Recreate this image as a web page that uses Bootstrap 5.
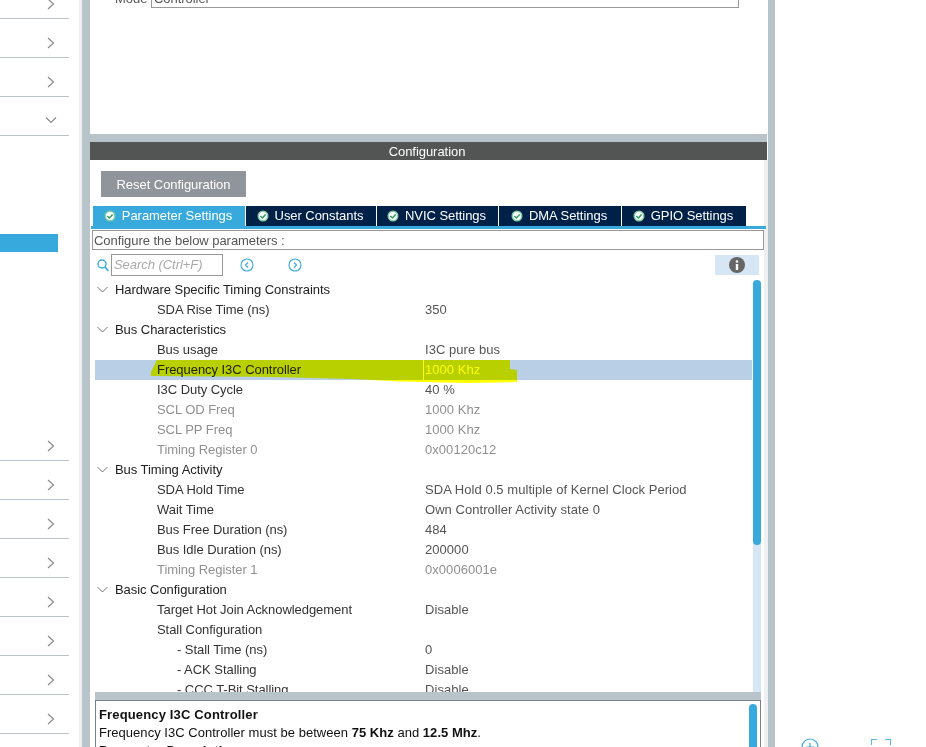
<!DOCTYPE html>
<html lang="en"><head><meta charset="utf-8"><title>Configuration</title>
<link rel="stylesheet" href="https://cdn.jsdelivr.net/npm/bootstrap@5.3.0/dist/css/bootstrap.min.css">
<style>
html,body{height:747px;overflow:hidden;background:#fff}
body{font-family:"Liberation Sans",Arial,sans-serif;font-size:13px;letter-spacing:-.05px;color:#333;position:relative;line-height:20px}
.shell{height:747px}
.side{width:69px;flex:none;margin-top:-20px}
.side-row{height:39px;border-bottom:1px solid #b9c4ca;padding:10px 14px 0 0}
.side-row.open{padding:8px 12px 0 0}
.side-gap{height:286px;padding-top:98px}
.side-sel{width:58px;height:18px;background:#38a9dc}
.strip{flex:none;margin-left:10px;width:11px;background:linear-gradient(90deg,#eef0f1 0,#eef0f1 3px,#b8c4ca 3px)}
.center{width:678px;flex:none}
.top-panel{height:134px;overflow:hidden;margin-right:1px}
.mode-row{margin-top:-11px;padding-left:25px;height:20px;color:#555}
.mode-lbl{width:36px;flex:none}
.mode-box{width:588px;border:1px solid #999;border-top:0;height:19px;padding-left:2px}
.band{height:8px;background:#b8c4ca;margin-right:1px}
.cfg-head{height:18px;margin-right:1px;background:#535554;color:#fff;text-align:center;line-height:19px;padding-right:3px}
.cfg-body{height:587px;overflow:hidden;position:relative;background:linear-gradient(90deg,#fff calc(100% - 4px),#eef0f1 0)}
.reset-btn{margin:11px 0 9px 11px;width:145px;height:26px;background:#8f959b;color:#fff;border:0;border-radius:0;font-size:13px;letter-spacing:-.05px;padding:1px 0 0;line-height:25px}
.tabs-row{margin-left:3px;height:20px;gap:1px}
.tab-item{height:20px;background:#002147;color:#fff;display:flex;align-items:center;justify-content:center;gap:6px;padding:0 2px 0 0}
.tab-item.on{background:#38a9dc}
.tab-line{height:3px;margin:0 2px 0 1px;background:#38a9dc}
.hint-box{height:20px;margin:1px 4px 0 2px;border:1px solid #999;padding-left:1px;line-height:19px;color:#555}
.search-row{height:22px;margin:4px 0 4px 7px;align-items:center}
.search-in{width:112px;height:22px;border:1px solid #999;padding:0 2px;font-style:italic;color:#aaa;line-height:20px;margin-left:2px}
.nav-ico{margin-left:17px}
.info-btn{width:44px;height:20px;background:#d6e6f5;margin-left:auto;margin-right:9px;display:flex;align-items:center;justify-content:center}
.tree-wrap{height:412px;margin-left:5px;margin-right:7px;overflow:hidden}
.tree{width:657px;flex:none;overflow:hidden;height:412px}
.t-row{height:20px;position:relative;line-height:19px}
.t-name{width:330px;flex:none}
.t-row .t-chev{width:18px;height:19px;flex:none;margin-left:2px;display:flex;align-items:center}
.lv1 .t-name{width:310px;color:#222}
.lv2 .t-name{margin-left:62px;width:268px}
.lv3 .t-name{margin-left:82px;width:248px}
.t-val{color:#555;letter-spacing:.05px}
.off,.off .t-val{color:#909090}
.t-sel{background:#b8cfe6;color:#222}
.t-sel .t-val{color:#fff;border-left:1px solid #fff;padding-left:1px;margin-left:-2px}
.tree-track{width:8px;flex:none;height:412px;margin-left:1px;background:#d6e6f5;border-radius:4px 4px 0 0}
.tree-thumb{height:265px;background:#38a9dc;border-radius:4px}
.desc-band{height:8px;margin:0 7px 0 5px;background:#b8c4ca}
.desc-box{margin:0 7px 0 5px;border:1px solid #76838a;border-bottom:0;height:60px;padding:5px 3px;color:#111;line-height:18px;letter-spacing:.03px;position:relative;overflow:hidden}
.desc-title{letter-spacing:.15px}
.desc-thumb{position:absolute;right:3px;top:3px;width:8px;height:60px;background:#38a9dc;border-radius:4px}
.gutter2{width:7px;flex:none;background:#b8c4ca}
.marker{position:absolute;left:150px;top:358px;width:370px;height:28px;mix-blend-mode:multiply;pointer-events:none}
.corner-ico{position:absolute;top:738px}
</style></head><body>
<div class="shell d-flex">
  <nav class="side">
    <div class="side-row d-flex align-items-center justify-content-end"><svg width="8" height="12" viewBox="0 0 8 12"><path d="M1 1l5.500 5L1 11" fill="none" stroke="#8a8a8a" stroke-width="1.200"/></svg></div>
    <div class="side-row d-flex align-items-center justify-content-end"><svg width="8" height="12" viewBox="0 0 8 12"><path d="M1 1l5.500 5L1 11" fill="none" stroke="#8a8a8a" stroke-width="1.200"/></svg></div>
    <div class="side-row d-flex align-items-center justify-content-end"><svg width="8" height="12" viewBox="0 0 8 12"><path d="M1 1l5.500 5L1 11" fill="none" stroke="#8a8a8a" stroke-width="1.200"/></svg></div>
    <div class="side-row open d-flex align-items-center justify-content-end"><svg width="12" height="8" viewBox="0 0 12 8"><path d="M1 1.500l5 5 5-5" fill="none" stroke="#8a8a8a" stroke-width="1.200"/></svg></div>
    <div class="side-gap"><div class="side-sel"></div></div>
    <div class="side-row d-flex align-items-center justify-content-end"><svg width="8" height="12" viewBox="0 0 8 12"><path d="M1 1l5.500 5L1 11" fill="none" stroke="#8a8a8a" stroke-width="1.200"/></svg></div>
    <div class="side-row d-flex align-items-center justify-content-end"><svg width="8" height="12" viewBox="0 0 8 12"><path d="M1 1l5.500 5L1 11" fill="none" stroke="#8a8a8a" stroke-width="1.200"/></svg></div>
    <div class="side-row d-flex align-items-center justify-content-end"><svg width="8" height="12" viewBox="0 0 8 12"><path d="M1 1l5.500 5L1 11" fill="none" stroke="#8a8a8a" stroke-width="1.200"/></svg></div>
    <div class="side-row d-flex align-items-center justify-content-end"><svg width="8" height="12" viewBox="0 0 8 12"><path d="M1 1l5.500 5L1 11" fill="none" stroke="#8a8a8a" stroke-width="1.200"/></svg></div>
    <div class="side-row d-flex align-items-center justify-content-end"><svg width="8" height="12" viewBox="0 0 8 12"><path d="M1 1l5.500 5L1 11" fill="none" stroke="#8a8a8a" stroke-width="1.200"/></svg></div>
    <div class="side-row d-flex align-items-center justify-content-end"><svg width="8" height="12" viewBox="0 0 8 12"><path d="M1 1l5.500 5L1 11" fill="none" stroke="#8a8a8a" stroke-width="1.200"/></svg></div>
    <div class="side-row d-flex align-items-center justify-content-end"><svg width="8" height="12" viewBox="0 0 8 12"><path d="M1 1l5.500 5L1 11" fill="none" stroke="#8a8a8a" stroke-width="1.200"/></svg></div>
    <div class="side-row d-flex align-items-center justify-content-end"><svg width="8" height="12" viewBox="0 0 8 12"><path d="M1 1l5.500 5L1 11" fill="none" stroke="#8a8a8a" stroke-width="1.200"/></svg></div>
  </nav>
  <div class="strip"></div>
  <main class="center">
    <div class="top-panel">
      <div class="mode-row d-flex"><span class="mode-lbl">Mode</span><div class="mode-box d-flex">Controller</div></div>
    </div>
    <div class="band"></div>
    <div class="cfg-head">Configuration</div>
    <div class="cfg-body">
      <button class="btn reset-btn d-block" type="button">Reset Configuration</button>
      <div class="tabs-row d-flex">
        <div class="tab-item on" style="width:152px"><svg width="12" height="12" viewBox="0 0 12 12"><circle cx="6" cy="6" r="5.500" fill="#7ccfa0"/><circle cx="6" cy="6" r="4" fill="#fff"/><path d="M3.400 6l2 2 3.200-3.600" fill="none" stroke="#2f9e63" stroke-width="1.500"/></svg>Parameter Settings</div>
        <div class="tab-item" style="width:130px"><svg width="12" height="12" viewBox="0 0 12 12"><circle cx="6" cy="6" r="5.500" fill="#7ccfa0"/><circle cx="6" cy="6" r="4" fill="#fff"/><path d="M3.400 6l2 2 3.200-3.600" fill="none" stroke="#2f9e63" stroke-width="1.500"/></svg>User Constants</div>
        <div class="tab-item" style="width:121px"><svg width="12" height="12" viewBox="0 0 12 12"><circle cx="6" cy="6" r="5.500" fill="#7ccfa0"/><circle cx="6" cy="6" r="4" fill="#fff"/><path d="M3.400 6l2 2 3.200-3.600" fill="none" stroke="#2f9e63" stroke-width="1.500"/></svg>NVIC Settings</div>
        <div class="tab-item" style="width:122px"><svg width="12" height="12" viewBox="0 0 12 12"><circle cx="6" cy="6" r="5.500" fill="#7ccfa0"/><circle cx="6" cy="6" r="4" fill="#fff"/><path d="M3.400 6l2 2 3.200-3.600" fill="none" stroke="#2f9e63" stroke-width="1.500"/></svg>DMA Settings</div>
        <div class="tab-item" style="width:124px"><svg width="12" height="12" viewBox="0 0 12 12"><circle cx="6" cy="6" r="5.500" fill="#7ccfa0"/><circle cx="6" cy="6" r="4" fill="#fff"/><path d="M3.400 6l2 2 3.200-3.600" fill="none" stroke="#2f9e63" stroke-width="1.500"/></svg>GPIO Settings</div>
      </div>
      <div class="tab-line"></div>
      <div class="hint-box">Configure the below parameters :</div>
      <div class="search-row d-flex">
        <svg width="12" height="13" viewBox="0 0 12 13"><circle cx="5" cy="5" r="4" fill="none" stroke="#38a9dc" stroke-width="1.400"/><path d="M8 8l3.400 4" stroke="#38a9dc" stroke-width="1.600"/></svg>
        <div class="search-in">Search (Ctrl+F)</div>
        <svg class="nav-ico" width="14" height="14" viewBox="0 0 14 14"><circle cx="7" cy="7" r="6" fill="none" stroke="#38a9dc" stroke-width="1.100"/><path d="M8 4.500L5.500 7 8 9.500" fill="none" stroke="#38a9dc" stroke-width="1.100"/></svg>
        <svg class="nav-ico" style="margin-left:34px" width="14" height="14" viewBox="0 0 14 14"><circle cx="7" cy="7" r="6" fill="none" stroke="#38a9dc" stroke-width="1.100"/><path d="M6 4.500L8.500 7 6 9.500" fill="none" stroke="#38a9dc" stroke-width="1.100"/></svg>
        <div class="info-btn"><svg width="16" height="16" viewBox="0 0 16 16"><circle cx="8" cy="8" r="8" fill="#666"/><rect x="6.800" y="7" width="2.400" height="6" fill="#fff"/><circle cx="8" cy="4.500" r="1.300" fill="#fff"/></svg></div>
      </div>
      <div class="tree-wrap d-flex">
        <div class="tree">
          <div class="t-row lv1 d-flex"><span class="t-chev"><svg width="11" height="7" viewBox="0 0 11 7"><path d="M.5 1l5 5 5-5" fill="none" stroke="#777" stroke-width="1"/></svg></span><span class="t-name">Hardware Specific Timing Constraints</span></div>
          <div class="t-row lv2 d-flex"><span class="t-name">SDA Rise Time (ns)</span><span class="t-val">350</span></div>
          <div class="t-row lv1 d-flex"><span class="t-chev"><svg width="11" height="7" viewBox="0 0 11 7"><path d="M.5 1l5 5 5-5" fill="none" stroke="#777" stroke-width="1"/></svg></span><span class="t-name">Bus Characteristics</span></div>
          <div class="t-row lv2 d-flex"><span class="t-name">Bus usage</span><span class="t-val">I3C pure bus</span></div>
          <div class="t-row lv2 t-sel d-flex"><span class="t-name">Frequency I3C Controller</span><span class="t-val">1000 Khz</span></div>
          <div class="t-row lv2 d-flex"><span class="t-name">I3C Duty Cycle</span><span class="t-val">40 %</span></div>
          <div class="t-row lv2 off d-flex"><span class="t-name">SCL OD Freq</span><span class="t-val">1000 Khz</span></div>
          <div class="t-row lv2 off d-flex"><span class="t-name">SCL PP Freq</span><span class="t-val">1000 Khz</span></div>
          <div class="t-row lv2 off d-flex"><span class="t-name">Timing Register 0</span><span class="t-val">0x00120c12</span></div>
          <div class="t-row lv1 d-flex"><span class="t-chev"><svg width="11" height="7" viewBox="0 0 11 7"><path d="M.5 1l5 5 5-5" fill="none" stroke="#777" stroke-width="1"/></svg></span><span class="t-name">Bus Timing Activity</span></div>
          <div class="t-row lv2 d-flex"><span class="t-name">SDA Hold Time</span><span class="t-val">SDA Hold 0.5 multiple of Kernel Clock Period</span></div>
          <div class="t-row lv2 d-flex"><span class="t-name">Wait Time</span><span class="t-val">Own Controller Activity state 0</span></div>
          <div class="t-row lv2 d-flex"><span class="t-name">Bus Free Duration (ns)</span><span class="t-val">484</span></div>
          <div class="t-row lv2 d-flex"><span class="t-name">Bus Idle Duration (ns)</span><span class="t-val">200000</span></div>
          <div class="t-row lv2 off d-flex"><span class="t-name">Timing Register 1</span><span class="t-val">0x0006001e</span></div>
          <div class="t-row lv1 d-flex"><span class="t-chev"><svg width="11" height="7" viewBox="0 0 11 7"><path d="M.5 1l5 5 5-5" fill="none" stroke="#777" stroke-width="1"/></svg></span><span class="t-name">Basic Configuration</span></div>
          <div class="t-row lv2 d-flex"><span class="t-name">Target Hot Join Acknowledgement</span><span class="t-val">Disable</span></div>
          <div class="t-row lv2 d-flex"><span class="t-name">Stall Configuration</span></div>
          <div class="t-row lv3 d-flex"><span class="t-name">- Stall Time (ns)</span><span class="t-val">0</span></div>
          <div class="t-row lv3 d-flex"><span class="t-name">- ACK Stalling</span><span class="t-val">Disable</span></div>
          <div class="t-row lv3 d-flex"><span class="t-name">- CCC T-Bit Stalling</span><span class="t-val">Disable</span></div>
        </div>
        <div class="tree-track"><div class="tree-thumb"></div></div>
      </div>
      <div class="desc-band"></div>
      <div class="desc-box"><strong class="desc-title">Frequency I3C Controller</strong><br>Frequency I3C Controller must be between <strong>75 Khz</strong> and <strong>12.5 Mhz</strong>.<br><strong>Parameter Description:</strong><div class="desc-thumb"></div></div>
    </div>
  </main>
  <div class="gutter2"></div>
</div>
<svg class="marker" viewBox="0 0 370 28"><path d="M7 2H360V11L367 12V24L318 25L250 23.500L202 21L122 19L1 18V14Z" fill="#ffff00"/></svg>
<svg class="corner-ico" style="left:801px" width="18" height="18" viewBox="0 0 18 18"><circle cx="9" cy="9" r="8" fill="none" stroke="#38a9dc" stroke-width="1.200"/><path d="M9 5v8M5 9h8" stroke="#38a9dc" stroke-width="1.200"/></svg>
<svg class="corner-ico" style="left:870px" width="22" height="12" viewBox="0 0 22 12"><path d="M1.500 7V1.500H7M15 1.500H20.500V7" fill="none" stroke="#62b5e3" stroke-width="1.200"/></svg>
</body></html>
